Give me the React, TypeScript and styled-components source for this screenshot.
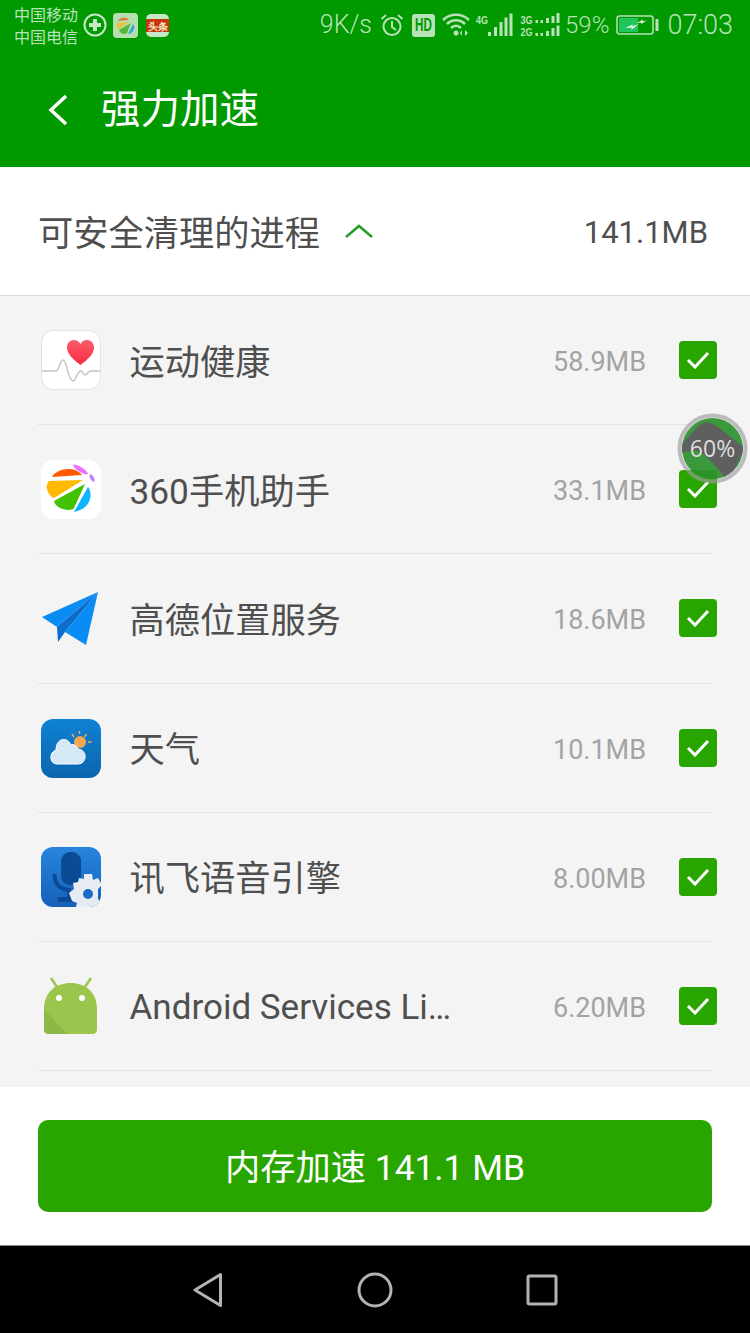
import React from "react";
import styled, {createGlobalStyle} from "styled-components";

const GlobalStyle = createGlobalStyle`
  html, body {
    margin: 0;
    padding: 0;
    background: #ffffff;
  }
  * {
    box-sizing: border-box;
  }
`

const Page = styled.div`
  position: relative;
  width: 750px;
  height: 1333px;
  display: flex;
  flex-direction: column;
  overflow: hidden;
  font-family: Roboto, "Noto Sans CJK SC", sans-serif;
`

/* status bar */
const StatusBar = styled.div`
  height: 50px;
  padding: 0 17px 0 14px;
  display: flex;
  align-items: center;
  background: #009900;
  color: #b8e2b8;
`

const Carrier = styled.div`
  width: 64px;
  margin-top: 3px;
  font-size: 16px;
  line-height: 22px;
`

const StatusSpacer = styled.div`
  flex: 1;
`

const StatusText = styled.span<{$size: number; $gap: number}>`
  margin-left: ${p => p.$gap}px;
  font-size: ${p => p.$size}px;
  font-weight: 300;
  line-height: 30px;
  white-space: nowrap;
`

const StatusGlyph = styled.svg<{$gap: number}>`
  display: block;
  flex: none;
  margin-left: ${p => p.$gap}px;
`

const GlyphLabel = styled.text`
  font-family: "Liberation Sans", sans-serif;
  font-weight: 700;
`

/* header */
const TopBar = styled.header`
  height: 117px;
  padding: 3px 0 0 48px;
  display: flex;
  align-items: center;
  background: #009900;
`

const BackIcon = styled.svg`
  display: block;
  margin-right: 33px;
`

const TopBarTitle = styled.h1`
  margin: 0;
  font-size: 39.5px;
  font-weight: 400;
  line-height: 50px;
  color: #ffffff;
`

/* section title */
const SectionHead = styled.div`
  height: 129px;
  padding: 0 42px 0 38px;
  display: flex;
  align-items: center;
  background: #ffffff;
  border-bottom: 1px solid #dddddd;
`

const SectionTitle = styled.div`
  padding-bottom: 2px;
  font-size: 35.25px;
  color: #4f4f4f;
`

const ChevronUp = styled.svg`
  display: block;
  margin-left: 25px;
`

const SectionTotal = styled.div`
  margin-left: auto;
  padding-top: 2px;
  font-size: 31px;
  color: #4f4f4f;
`

/* process list */
const ProcessList = styled.div`
  flex: 1;
  min-height: 0;
  overflow: hidden;
  background: #f4f4f4;
`

const ProcessRow = styled.div`
  height: 129.2px;
  margin: 0 38px;
  display: flex;
  align-items: center;
  border-bottom: 1px solid #e3e3e3;
`

const AppIcon = styled.svg`
  display: block;
  flex: none;
  margin-left: 3px;
`

const AppName = styled.div<{$latin?: boolean}>`
  margin-left: 28.5px;
  padding: ${p => (p.$latin ? "3px 0 0" : "0 0 2px")};
  font-size: ${p => (p.$latin ? 35 : 35.25)}px;
  color: #4f4f4f;
  white-space: nowrap;
`

const AppSize = styled.div`
  margin-left: auto;
  padding-top: 4px;
  font-size: 27px;
  color: #a3a3a3;
`

const CheckBox = styled.div`
  flex: none;
  width: 38px;
  height: 38px;
  margin: 0 -5px 0 33px;
  display: flex;
  align-items: center;
  justify-content: center;
  background: #29a500;
  border-radius: 4px;
`

/* floating memory ball */
const FloatBall = styled.div`
  position: absolute;
  top: 413px;
  left: 677px;
  width: 71px;
  height: 71px;
  display: flex;
  align-items: center;
  justify-content: center;
`

const FloatBallArt = styled.svg`
  position: absolute;
  top: 0;
  left: 0;
`

const FloatBallText = styled.span`
  position: relative;
  margin-bottom: 2px;
  font-family: "Open Sans", sans-serif;
  font-size: 23px;
  color: #dedede;
`

/* bottom action */
const ActionArea = styled.div`
  height: 158px;
  padding: 33px 38px;
  background: #ffffff;
`

const BoostButton = styled.button`
  width: 100%;
  height: 92px;
  padding: 0 0 4px;
  border: none;
  border-radius: 10px;
  background: #29a500;
  font-family: Roboto, "Noto Sans CJK SC", sans-serif;
  font-size: 35.25px;
  color: #ffffff;
`

/* navigation bar */
const NavBar = styled.nav`
  height: 88px;
  display: flex;
  align-items: center;
  justify-content: center;
  background: #000000;
  border-top: 1px solid #8a8a8a;
`

const NavButton = styled.div`
  width: 167px;
  display: flex;
  justify-content: center;
`

const HeartIcon = () => (
  <AppIcon width={60} height={60} viewBox="0 0 60 60">
    <defs>
      <linearGradient id="heartFill" x1="0" y1="0" x2="0" y2="1">
        <stop offset="0" stopColor="#fb5f6b"/>
        <stop offset="1" stopColor="#fb2740"/>
      </linearGradient>
    </defs>
    <rect x="0.5" y="0.5" width="59" height="59" rx="12" fill="#ffffff" stroke="#e4e4e4"/>
    <path d="M39.5 35C33 30 26 24.500 26 17.500C26 9 36.500 7.500 39.500 14C42.500 7.500 53 9 53 17.500C53 24.500 46 30 39.500 35Z" fill="url(#heartFill)"/>
    <path d="M1 41H15C18 41 19 30 22 30C26 30 27 51 32 51C35 51 36 41 40 41C42 41 42 45 44 45C46 45 47 41 50 41H59" fill="none" stroke="#c4c4c4" strokeWidth="1.500"/>
  </AppIcon>
)

const AssistantIcon = () => (
  <AppIcon width={60} height={60} viewBox="0 -1 60 60">
    <rect y="0" width="60" height="59" rx="12" fill="#ffffff"/>
    <path d="M11 17C15 9 33 5 41 15Z" fill="#ff5a00"/>
    <path d="M8 21L42 20L13 38C7 36 3 26 8 21Z" fill="#ffb900"/>
    <path d="M13 41L44 24L33 48C31 52 15 50 13 41Z" fill="#43c000"/>
    <path d="M33 52L47 27C52 33 51 48 33 52Z" fill="#0cb6ff"/>
    <ellipse cx="39.500" cy="9.500" rx="8.500" ry="2.300" transform="rotate(32 39.500 9.500)" fill="#ee6dff"/>
    <ellipse cx="51" cy="18" rx="1.800" ry="4" transform="rotate(-30 51 18)" fill="#c77cff"/>
  </AppIcon>
)

const PlaneIcon = () => (
  <AppIcon width={60} height={60} viewBox="0 -3 60 60">
    <path d="M1 26L57 1L16 36Z" fill="#0a8cf5"/>
    <path d="M16 36L57 1L24 41L17 51Z" fill="#0b6ccb"/>
    <path d="M57 1L45 54L24 41Z" fill="#0a8cf5"/>
  </AppIcon>
)

const WeatherIcon = () => (
  <AppIcon width={60} height={60} viewBox="0 -1 60 60">
    <defs>
      <linearGradient id="weatherBg" x1="0" y1="0" x2="0" y2="1">
        <stop offset="0" stopColor="#0f82d4"/>
        <stop offset="1" stopColor="#0a66ad"/>
      </linearGradient>
    </defs>
    <rect y="0" width="60" height="59" rx="12" fill="url(#weatherBg)"/>
    <circle cx="39" cy="23" r="6" fill="#f3a94f"/>
    <path d="M31 15L33 18M38.500 12V15M45.500 15L43.500 18M47 23H50.500" stroke="#f3a94f" strokeWidth="1.500" fill="none"/>
    <path d="M16 45H37C46 45 47 31 37 30C35 25 31 25 30 26C26 17 15 19 15 31C8 33 8 45 16 45Z" fill="#d5e8f5" stroke="#ffffff"/>
  </AppIcon>
)

const VoiceIcon = () => (
  <AppIcon width={60} height={60} viewBox="0 0 60 60">
    <defs>
      <linearGradient id="voiceBg" x1="0" y1="0" x2="0" y2="1">
        <stop offset="0" stopColor="#2785dd"/>
        <stop offset="1" stopColor="#1560ba"/>
      </linearGradient>
      <clipPath id="voiceClip">
        <rect width="60" height="60" rx="12"/>
      </clipPath>
    </defs>
    <g clipPath="url(#voiceClip)">
      <rect width="60" height="60" fill="url(#voiceBg)"/>
      <rect x="20" y="5" width="20" height="33" rx="9" fill="#0b4a94"/>
      <path d="M13.500 27C13.500 37 19 43 30 43M28 43V51" stroke="#0b4a94" strokeWidth="4" fill="none"/>
      <rect x="17" y="50" width="20" height="5" fill="#0b4a94"/>
      <path d="M43 27H51L52 33L57 31L61 38L57 42V52L61 56L57 63H34L36 56L31 54L28 46L33 42L32 36L37 35L38 31L43 32Z" fill="#e6ecf2"/>
      <circle cx="47" cy="47" r="5" fill="#1a6cc4"/>
    </g>
  </AppIcon>
)

const AndroidIcon = () => (
  <AppIcon width={60} height={60} viewBox="0 -2 60 60">
    <path d="M10 0L16 9M50 0L44 9" stroke="#9bc54d" strokeWidth="2.500" fill="none"/>
    <path d="M3 31C3 14 15 5 29.500 5C44 5 56 14 56 31Z" fill="#9bc54d"/>
    <path d="M3 31H56V52C56 54 54 56 52 56H7C5 56 3 54 3 52Z" fill="#9bc54d"/>
    <path d="M3 31L26 56H7C5 56 3 54 3 52Z" fill="#8cb845"/>
    <circle cx="18" cy="20" r="3" fill="#ffffff"/>
    <circle cx="41" cy="20" r="3" fill="#ffffff"/>
  </AppIcon>
)

const processes = [
  {name: "运动健康", size: "58.9MB", icon: <HeartIcon/>},
  {name: "360手机助手", size: "33.1MB", icon: <AssistantIcon/>},
  {name: "高德位置服务", size: "18.6MB", icon: <PlaneIcon/>},
  {name: "天气", size: "10.1MB", icon: <WeatherIcon/>},
  {name: "讯飞语音引擎", size: "8.00MB", icon: <VoiceIcon/>},
  {name: "Android Services Li…", size: "6.20MB", icon: <AndroidIcon/>, latin: true},
]

const App = () => {
  return (
    <Page>
      <GlobalStyle/>
      <StatusBar>
        <Carrier>中国移动<br/>中国电信</Carrier>
        <StatusGlyph $gap={5} width={24} height={24} viewBox="0 0 24 24">
          <circle cx="12" cy="12" r="10.500" fill="none" stroke="#c6e8c6" strokeWidth="2"/>
          <path d="M12 6V18M6 12H18" stroke="#c6e8c6" strokeWidth="4"/>
        </StatusGlyph>
        <StatusGlyph $gap={6} width={25} height={25} viewBox="0 0 25 25">
          <rect width="25" height="25" rx="4" fill="#b6dfb0"/>
          <path d="M5 8C7 4 13 3 16 7Z" fill="#e0763c"/>
          <path d="M4 10L16 9L6 16C4 15 3 12 4 10Z" fill="#e6c23c"/>
          <path d="M6 17L18 10L14 20C12 22 7 21 6 17Z" fill="#56b83c"/>
          <path d="M15 21L20 11C23 14 21 20 15 21Z" fill="#35a9d8"/>
        </StatusGlyph>
        <StatusGlyph $gap={8} width={23} height={23} viewBox="0 0 23 23">
          <rect width="23" height="23" rx="5" fill="#c6e8c6"/>
          <rect y="5" width="23" height="13" fill="#c7350f"/>
          <GlyphLabel x="11.500" y="15.500" fontSize="10" textAnchor="middle" fill="#f5e6c0">头条</GlyphLabel>
        </StatusGlyph>
        <StatusSpacer/>
        <StatusText $size={25} $gap={0}>9K/s</StatusText>
        <StatusGlyph $gap={8} width={24} height={24} viewBox="0 0 24 24">
          <circle cx="12" cy="13.500" r="8.500" fill="none" stroke="#b8e2b8" strokeWidth="2"/>
          <path d="M12 8V14L16 17M1.500 6L6 2M22.500 6L18 2" fill="none" stroke="#b8e2b8" strokeWidth="2"/>
        </StatusGlyph>
        <StatusGlyph $gap={8} width={23} height={23} viewBox="0 0 23 23">
          <rect width="23" height="23" rx="3" fill="#b8e2b8"/>
          <GlyphLabel x="3.300" y="12.600" fontSize="13" transform="scale(0.9 1.35)" fill="#009900">HD</GlyphLabel>
        </StatusGlyph>
        <StatusGlyph $gap={7} width={28} height={24} viewBox="0 0 28 24">
          <path d="M1 7C8 0 20 0 27 7M5 11C10 6 18 6 23 11M9 15C12 12 16 12 19 15" fill="none" stroke="#b8e2b8" strokeWidth="2.500"/>
          <circle cx="14" cy="20" r="2.500" fill="#b8e2b8"/>
          <path d="M20 17V23L18 20ZM23 17V23L26 20Z" fill="#b8e2b8"/>
        </StatusGlyph>
        <StatusGlyph $gap={5} width={38} height={24} viewBox="0 0 38 24">
          <GlyphLabel x="1" y="10.500" fontSize="11.500" textLength="12" lengthAdjust="spacingAndGlyphs" fill="#b8e2b8">4G</GlyphLabel>
          <path d="M13 19H16V23H13ZM19 14H22V23H19ZM24.500 9H27.500V23H24.500ZM29.500 4.500H32.500V23H29.500ZM34.500 0.500H37.500V23H34.500Z" fill="#b8e2b8"/>
        </StatusGlyph>
        <StatusGlyph $gap={7} width={40} height={24} viewBox="0 0 40 24">
          <GlyphLabel x="0.500" y="10.500" fontSize="11.500" textLength="12" lengthAdjust="spacingAndGlyphs" fill="#b8e2b8">3G</GlyphLabel>
          <GlyphLabel x="0.500" y="23" fontSize="11.500" textLength="12" lengthAdjust="spacingAndGlyphs" fill="#b8e2b8">2G</GlyphLabel>
          <path d="M15.500 7H18V10H15.500ZM20.500 7H23V10H20.500ZM26 5H29V10H26ZM31.500 3H34.500V10H31.500ZM36.500 0H39.500V10H36.500Z" fill="#b8e2b8"/>
          <path d="M15.500 20H18V23H15.500ZM20.500 20H23V23H20.500ZM26 18H29V23H26ZM31.500 15H34.500V23H31.500ZM36.500 12.500H39.500V23H36.500Z" fill="#b8e2b8"/>
        </StatusGlyph>
        <StatusText $size={24} $gap={5}>59%</StatusText>
        <StatusGlyph $gap={7} width={43} height={20} viewBox="0 0 43 20">
          <rect x="1" y="1" width="36" height="18" rx="2.500" fill="none" stroke="#b8e2b8" strokeWidth="1.500"/>
          <rect x="3" y="3" width="19" height="14" fill="#1fc45a"/>
          <path d="M9 13L17 9.500L16 11.500L23 9L15 15L16 12.500ZM21 8L27 4.500L26.500 6.500L31 5.500L25 9L25.500 7.500Z" fill="#eef9ee"/>
          <rect x="39.500" y="4" width="3" height="12" fill="#b8e2b8"/>
        </StatusGlyph>
        <StatusText $size={27} $gap={8}>07:03</StatusText>
      </StatusBar>

      <TopBar>
        <BackIcon width={20} height={32} viewBox="0 0 20 32">
          <path d="M18 2L3 16L18 30" fill="none" stroke="#ffffff" strokeWidth="3.500"/>
        </BackIcon>
        <TopBarTitle>强力加速</TopBarTitle>
      </TopBar>

      <SectionHead>
        <SectionTitle>可安全清理的进程</SectionTitle>
        <ChevronUp width={28} height={14} viewBox="0 0 28 14">
          <path d="M1 13L14 2L27 13" fill="none" stroke="#259f2a" strokeWidth="2.500"/>
        </ChevronUp>
        <SectionTotal>141.1MB</SectionTotal>
      </SectionHead>

      <ProcessList>
        {processes.map(item => (
          <ProcessRow key={item.name}>
            {item.icon}
            <AppName $latin={item.latin}>{item.name}</AppName>
            <AppSize>{item.size}</AppSize>
            <CheckBox>
              <svg width="24" height="18" viewBox="0 0 24 18">
                <path d="M2 9L9 16L22 2" fill="none" stroke="#ffffff" strokeWidth="3"/>
              </svg>
            </CheckBox>
          </ProcessRow>
        ))}
      </ProcessList>

      <FloatBall>
        <FloatBallArt width={71} height={71} viewBox="0 0 71 71">
          <defs>
            <clipPath id="ballClip">
              <circle cx="35.500" cy="35.500" r="30.500"/>
            </clipPath>
          </defs>
          <circle cx="35.500" cy="35.500" r="33" fill="none" stroke="#9c9c9c" strokeOpacity="0.650" strokeWidth="4"/>
          <g clipPath="url(#ballClip)">
            <rect width="71" height="71" fill="#2b8f2b" fillOpacity="0.920"/>
            <path d="M4 32C14 22 21 10 30 9C42 11 54 27 68 34C63 45 58 57 50 68C41 55 29 41 20 38C14 37 8 38 3 41Z" fill="#5f5f5f"/>
          </g>
        </FloatBallArt>
        <FloatBallText>60%</FloatBallText>
      </FloatBall>

      <ActionArea>
        <BoostButton>内存加速 141.1 MB</BoostButton>
      </ActionArea>

      <NavBar>
        <NavButton>
          <svg width="30" height="36" viewBox="0 0 30 36">
            <path d="M2 18L27.500 2.500V33.500Z" fill="none" stroke="#b3b3b3" strokeWidth="3" strokeLinejoin="round"/>
          </svg>
        </NavButton>
        <NavButton>
          <svg width="36" height="36" viewBox="0 0 36 36">
            <circle cx="18" cy="18" r="16" fill="none" stroke="#b3b3b3" strokeWidth="3"/>
          </svg>
        </NavButton>
        <NavButton>
          <svg width="32" height="32" viewBox="0 0 32 32">
            <rect x="2" y="2" width="28" height="28" rx="1.500" fill="none" stroke="#b3b3b3" strokeWidth="3"/>
          </svg>
        </NavButton>
      </NavBar>
    </Page>
  )
}

export default App;
